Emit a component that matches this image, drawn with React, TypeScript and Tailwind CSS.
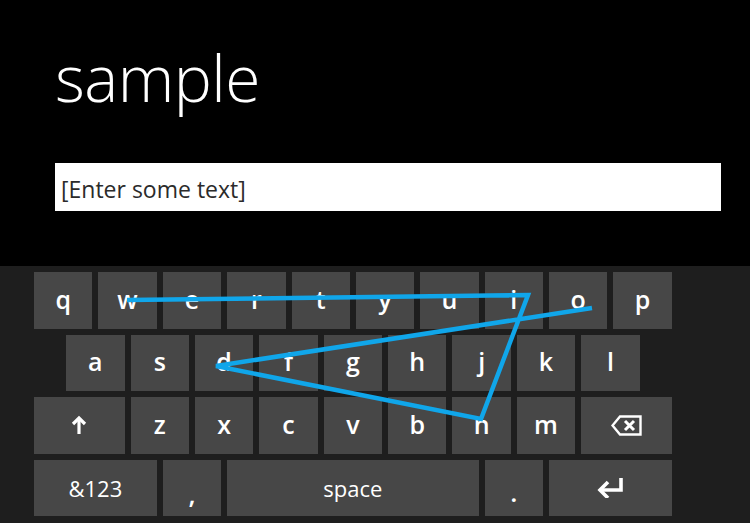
const rows: { label: string; span: string }[][] = [
  "qwertyuiop".split("").map((k) => ({ label: k, span: "col-span-2" })),
  "asdfghjkl".split("").map((k, i) => ({ label: k, span: i === 0 ? "col-span-2 col-start-2" : "col-span-2" })),
  [
    { label: "shift", span: "col-span-3" },
    ..."zxcvbnm".split("").map((k) => ({ label: k, span: "col-span-2" })),
    { label: "back", span: "col-span-3" },
  ],
  [
    { label: "&123", span: "col-span-4" },
    { label: ",", span: "col-span-2" },
    { label: "space", span: "col-span-8" },
    { label: ".", span: "col-span-2" },
    { label: "enter", span: "col-span-4" },
  ],
];

function ShiftIcon() {
  return (
    <svg width="16" height="20" viewBox="0 0 16 20" fill="none" stroke="white" strokeWidth="3.2" strokeLinejoin="miter">
      <path d="M8 19V3" />
      <path d="M2 9l6-6 6 6" />
    </svg>
  );
}

function BackspaceIcon() {
  return (
    <svg width="31" height="21" viewBox="0 0 31 21" fill="none" stroke="white">
      <path d="M29.5 1.5H9L1.5 10.5 9 19.5h20.5z" strokeWidth="2.4" strokeLinejoin="miter" />
      <path d="M14 6l9 9M23 6l-9 9" strokeWidth="3" />
    </svg>
  );
}

function EnterIcon() {
  return (
    <svg width="27" height="21" viewBox="0 0 27 21" fill="none" stroke="white" strokeWidth="3.6">
      <path d="M24 1v12H4" />
      <path d="M11 5l-8 8 8 8" strokeLinejoin="miter" />
    </svg>
  );
}

function KeyLabel({ label }: { label: string }) {
  if (label === "shift") return <ShiftIcon />;
  if (label === "back") return <BackspaceIcon />;
  if (label === "enter") return <EnterIcon />;
  if (label === "&123" || label === "space")
    return <span className="text-[22px] leading-none font-normal">{label}</span>;
  if (label === ",") return <span className="text-[26px] leading-none mt-[12px]">{label}</span>;
  if (label === ".") return <span className="text-[26px] leading-none mt-[8px]">{label}</span>;
  return <span className="text-[25px] leading-none mt-[-2px]">{label}</span>;
}

export default function App() {
  return (
    <div className="relative w-[750px] h-[523px] overflow-hidden bg-black font-['Open_Sans','Liberation_Sans',sans-serif]">
      <div className="h-[266px] pl-[55px] pr-[29px] pt-[46px]">
        <h1 className="text-[64px] font-light leading-none text-white tracking-[-0.5px]">sample</h1>
        <div className="mt-[53px] flex h-[48px] items-center bg-white pl-[6px] pt-[5px] text-[23px] leading-none text-[#2b2b2b]">
          [Enter some text]
        </div>
      </div>

      <div className="h-[257px] bg-[#1e1e1e] pl-[34px] pt-[6px]">
        <div className="grid grid-cols-[repeat(20,26.2px)] auto-rows-[56.5px] gap-[6px] font-semibold">
          {rows.map((row, r) =>
            row.map((key) => (
              <div
                key={r + key.label}
                className={`${key.span} flex items-center justify-center bg-[#474747] text-white`}
              >
                <KeyLabel label={key.label} />
              </div>
            ))
          )}
        </div>
      </div>

      {/* swipe trace drawn over the keys */}
      <svg className="pointer-events-none absolute inset-0" width="750" height="523">
        <polyline
          points="127,300 528,295 481,419 216,366 592,308"
          fill="none"
          stroke="#10a6ea"
          strokeWidth="4.5"
          strokeLinejoin="miter"
          strokeLinecap="butt"
        />
      </svg>
    </div>
  );
}
